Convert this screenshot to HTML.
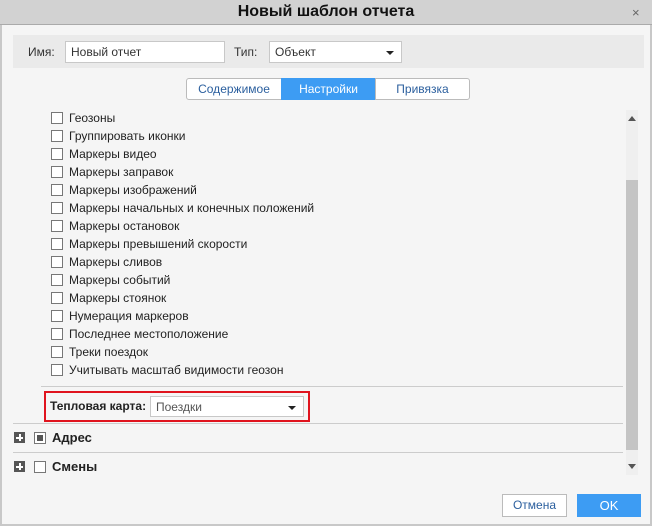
<!DOCTYPE html>
<html><head><meta charset="utf-8"><style>
*{margin:0;padding:0;box-sizing:border-box}
body{width:652px;height:526px;overflow:hidden;font-family:"Liberation Sans",sans-serif;font-size:12px;color:#222;background:#f5f5f5;position:relative}
.a{position:absolute}
.title{left:0;top:0;width:652px;height:25px;background:#d2d2d2;border-bottom:1px solid #aaa;text-align:center;font-size:16px;font-weight:bold;line-height:24px;color:#111}
.frame{left:0;top:25px;width:652px;height:501px;border-left:2px solid #c8c8c8;border-right:2px solid #c8c8c8;border-bottom:2px solid #c8c8c8}
.inp{background:#fff;border:1px solid #c8c8c8;height:22px;line-height:20px;padding-left:5px;color:#333}
.arr{position:absolute;right:7px;top:9px;width:0;height:0;border-left:4px solid transparent;border-right:4px solid transparent;border-top:4px solid #222}
.cb{position:absolute;width:12px;height:12px;border:1px solid #777;background:#fff}
.row{position:absolute;left:69px;line-height:14px}
.tab{position:absolute;top:78px;height:22px;line-height:20px;text-align:center;color:#2b5f9e;border:1px solid #bbb;background:#fff}
</style></head><body>
<div class="a frame"></div>
<div class="a title">Новый шаблон отчета</div>
<div class="a" style="left:632px;top:5px;font-size:13px;color:#666">×</div>
<div class="a" style="left:13px;top:35px;width:631px;height:33px;background:#eaeaea"></div>
<div class="a" style="left:28px;top:45px;color:#333">Имя:</div>
<div class="a inp" style="left:65px;top:41px;width:160px">Новый отчет</div>
<div class="a" style="left:234px;top:45px;color:#333">Тип:</div>
<div class="a inp" style="left:269px;top:41px;width:133px">Объект<span class="arr"></span></div>
<div class="tab" style="left:186px;width:96px;border-radius:3px 0 0 3px">Содержимое</div>
<div class="tab" style="left:281px;width:95px;background:#3d9cf3;border-color:#3d9cf3;color:#fff">Настройки</div>
<div class="tab" style="left:375px;width:95px;border-radius:0 3px 3px 0">Привязка</div>
<div class="a" style="left:626px;top:110px;width:12px;height:365px;background:#efefef"></div>
<div class="a" style="left:626px;top:180px;width:12px;height:270px;background:#c4c4c4"></div>
<div class="a" style="left:628px;top:116px;border-left:4px solid transparent;border-right:4px solid transparent;border-bottom:5px solid #555"></div>
<div class="a" style="left:628px;top:464px;border-left:4px solid transparent;border-right:4px solid transparent;border-top:5px solid #555"></div>
<div id="list"></div>
<div class="a" style="left:41px;top:386px;width:582px;height:1px;background:#ccc"></div>
<div class="a" style="left:44px;top:391px;width:266px;height:31px;border:2px solid #e0141e"></div>
<div class="a" style="left:50px;top:399px;font-weight:bold">Тепловая карта:</div>
<div class="a inp" style="left:150px;top:396px;width:154px;height:21px;color:#555">Поездки<span class="arr"></span></div>
<div class="a" style="left:13px;top:423px;width:610px;height:1px;background:#ccc"></div>
<div class="a" style="left:13px;top:452px;width:610px;height:1px;background:#ccc"></div>
<div class="a" style="left:14px;top:432px;width:11px;height:11px;background:#555"><div class="a" style="left:2px;top:4.5px;width:7px;height:2px;background:#fff"></div><div class="a" style="left:4.5px;top:2px;width:2px;height:7px;background:#fff"></div></div>
<div class="cb" style="left:34px;top:432px"><div class="a" style="left:2px;top:2px;width:6px;height:6px;background:#555"></div></div>
<div class="a" style="left:52px;top:430px;font-size:13px;font-weight:bold">Адрес</div>
<div class="a" style="left:14px;top:461px;width:11px;height:11px;background:#555"><div class="a" style="left:2px;top:4.5px;width:7px;height:2px;background:#fff"></div><div class="a" style="left:4.5px;top:2px;width:2px;height:7px;background:#fff"></div></div>
<div class="cb" style="left:34px;top:461px"></div>
<div class="a" style="left:52px;top:459px;font-size:13px;font-weight:bold">Смены</div>
<div class="a" style="left:502px;top:494px;width:65px;height:23px;border:1px solid #bbb;background:#fff;text-align:center;line-height:21px;color:#2b5f9e">Отмена</div>
<div class="a" style="left:577px;top:494px;width:64px;height:23px;background:#3d9cf3;text-align:center;line-height:23px;color:#fff;font-size:13px">OK</div>
<script>
var t=["Геозоны","Группировать иконки","Маркеры видео","Маркеры заправок","Маркеры изображений","Маркеры начальных и конечных положений","Маркеры остановок","Маркеры превышений скорости","Маркеры сливов","Маркеры событий","Маркеры стоянок","Нумерация маркеров","Последнее местоположение","Треки поездок","Учитывать масштаб видимости геозон"],h="";
t.forEach(function(s,i){var y=112+i*18;h+='<div class="cb" style="left:51px;top:'+y+'px"></div><div class="row" style="top:'+(y-1)+'px">'+s+'</div>';});
document.getElementById("list").innerHTML=h;
</script>
</body></html>
